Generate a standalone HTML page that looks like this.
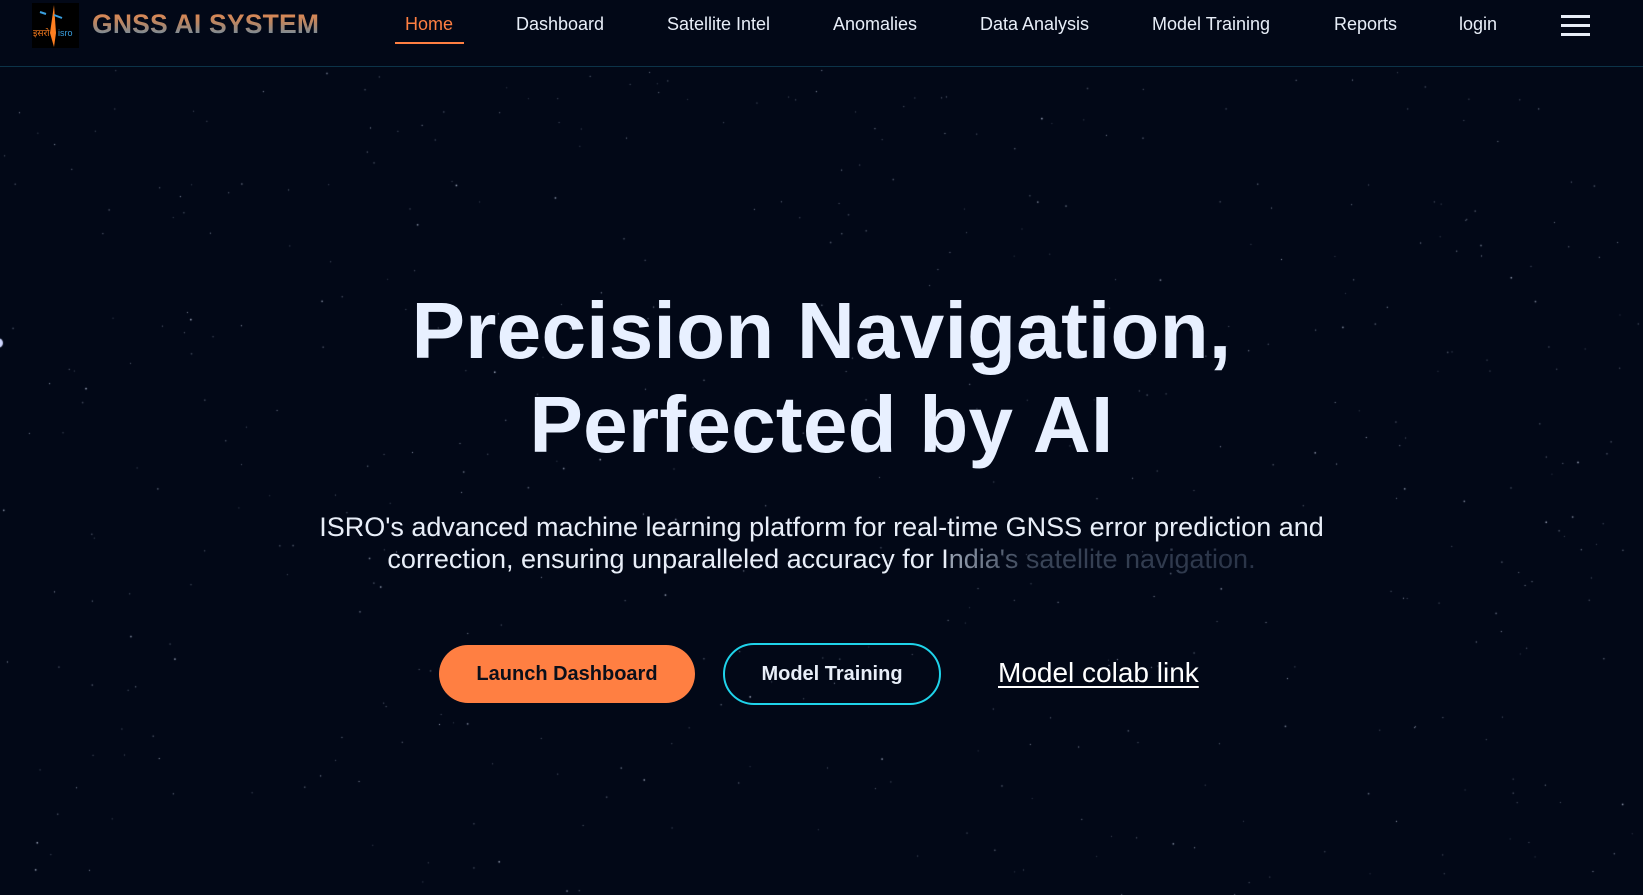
<!DOCTYPE html>
<html><head><meta charset="utf-8">
<style>
*{margin:0;padding:0;box-sizing:border-box}
html,body{width:1643px;height:895px;overflow:hidden;background:#020817;font-family:"Liberation Sans",Arial,sans-serif;}
#stars{position:absolute;left:0;top:0;width:1643px;height:895px}
header{position:absolute;left:0;top:0;width:1643px;height:67px;border-bottom:1px solid #0c3348;}
.logo{position:absolute;left:32px;top:3px;width:47px;height:45px;background:#000;}
.title{position:absolute;left:92px;top:9px;font-size:26.5px;font-weight:bold;letter-spacing:0.2px;
background:linear-gradient(180deg,#f08a4c 0%,#b88563 45%,#5b8fb3 100%);-webkit-background-clip:text;color:transparent;}
nav a{position:absolute;top:14px;font-size:18px;color:#e8eef8;text-decoration:none;white-space:nowrap}
nav a.active{color:#ff7f42}
.uline{position:absolute;left:395px;top:42px;width:69px;height:2px;background:#ff7f42}
.ham{position:absolute;left:1561px;top:15px;width:29px;height:21px}
.ham i{display:block;height:3px;background:#e8eef8;margin-bottom:6px}
h1{position:absolute;left:0;width:1643px;top:284px;text-align:center;font-size:80px;line-height:94px;font-weight:bold;color:#e8f0ff;letter-spacing:0.3px}
p.sub{position:absolute;left:0;width:1643px;top:511px;text-align:center;font-size:27px;line-height:32px;color:#e8eef8}
.fade{background:linear-gradient(90deg,#9aa4b4 0%,#3a4558 25%,#2a3448 100%);-webkit-background-clip:text;color:transparent}
.btn1{position:absolute;left:439px;top:645px;width:256px;height:58px;border-radius:29px;background:#ff7f42;color:#0b0f1a;font-weight:bold;font-size:20px;text-align:center;line-height:58px}
.btn2{position:absolute;left:723px;top:643px;width:218px;height:62px;border-radius:31px;border:2px solid #1fd3ea;color:#e8eef8;font-weight:bold;font-size:20px;text-align:center;line-height:58px}
.link{position:absolute;left:998px;top:657px;font-size:28px;color:#fff;text-decoration:underline;text-underline-offset:4px}
</style></head><body>
<canvas id="stars" width="1643" height="895"></canvas>
<header>
<div class="logo"><svg width="47" height="45" viewBox="0 0 47 45"><path d="M22 2 L18 30 L22 44 L24 30 Z" fill="#ff7f20"/><path d="M8 9l6 2M22 12l8 3" stroke="#3aa0e0" stroke-width="2"/><text x="1" y="33" font-size="9" fill="#ff7f20" font-family="Noto Sans CJK SC, sans-serif">इसरो</text><text x="26" y="33" font-size="9" fill="#3aa0e0" font-family="Liberation Sans">isro</text></svg></div>
<div class="title">GNSS AI SYSTEM</div>
<nav>
<a class="active" style="left:405px">Home</a>
<a style="left:516px">Dashboard</a>
<a style="left:667px">Satellite Intel</a>
<a style="left:833px">Anomalies</a>
<a style="left:980px">Data Analysis</a>
<a style="left:1152px">Model Training</a>
<a style="left:1334px">Reports</a>
<a style="left:1459px">login</a>
</nav>
<div class="uline"></div>
<div class="ham"><i></i><i></i><i></i></div>
</header>
<h1>Precision Navigation,<br>Perfected by AI</h1>
<p class="sub">ISRO's advanced machine learning platform for real-time GNSS error prediction and<br>correction, ensuring unparalleled accuracy for I<span class="fade">ndia's satellite navigation.</span></p>
<div class="btn1">Launch Dashboard</div>
<div class="btn2">Model Training</div>
<a class="link">Model colab link</a>
<script>
var c=document.getElementById('stars').getContext('2d');var s=12345;function r(){s=(s*16807)%2147483647;return s/2147483647;}
for(var i=0;i<500;i++){var x=r()*1643,y=70+r()*825;c.fillStyle='rgba(220,230,255,'+(0.25+r()*0.5)+')';var z=r()<0.85?1:1.5;c.fillRect(x,y,z,z);}
c.fillStyle='#cfd6ff';c.beginPath();c.arc(-2,343,5,0,7);c.fill();
</script>
</body></html>
